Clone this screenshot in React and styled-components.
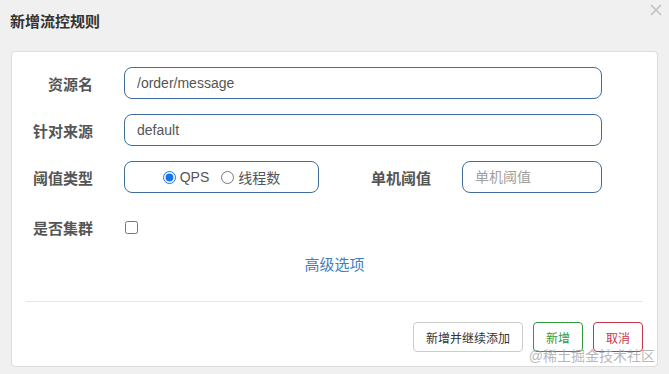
import * as React from 'react';
import styled, { createGlobalStyle } from 'styled-components';

const GlobalStyle = createGlobalStyle`
    html, body {
        margin: 0;
        padding: 0;
        background: #f0f0f0;
    }
    body {
        font-family: "Liberation Sans", "Noto Sans CJK SC", sans-serif;
    }
`;

export default function App() {
    return (
        <Dialog>
            <GlobalStyle />
            <Header>
                <Title>新增流控规则</Title>
                <Close width="12" height="12" viewBox="0 0 12 12">
                    <path d="M1 1 L11 11 M11 1 L1 11" stroke="#c2c2c2" strokeWidth="1.6" fill="none" />
                </Close>
            </Header>
            <Card>
                <Form>
                    <Row>
                        <Label>资源名</Label>
                        <Input width={478} defaultValue="/order/message" />
                    </Row>
                    <Row>
                        <Label>针对来源</Label>
                        <Input width={478} defaultValue="default" />
                    </Row>
                    <Row>
                        <Label>阈值类型</Label>
                        <RadioBox>
                            <RadioItem>
                                <input type="radio" name="grade" defaultChecked />
                                QPS
                            </RadioItem>
                            <RadioItem>
                                <input type="radio" name="grade" />
                                线程数
                            </RadioItem>
                        </RadioBox>
                        <Label width={112}>单机阈值</Label>
                        <Input width={140} placeholder="单机阈值" />
                    </Row>
                    <Row offset={3}>
                        <Label>是否集群</Label>
                        <Check type="checkbox" />
                    </Row>
                </Form>
                <More>高级选项</More>
                <Divider />
                <Footer>
                    <Button>新增并继续添加</Button>
                    <Button tone="#2e9a3e">新增</Button>
                    <Button tone="#c9354b">取消</Button>
                </Footer>
                <Mark>@稀土掘金技术社区</Mark>
            </Card>
        </Dialog>
    );
}

const Dialog = styled.div`
    width: 669px;
    height: 374px;
    padding: 0 11px;
    box-sizing: border-box;
    overflow: hidden;
`;

const Header = styled.div`
    position: relative;
    height: 51px;
    display: flex;
    align-items: center;
    padding-bottom: 11px;
    box-sizing: border-box;
    margin-left: -1px;
`;

const Title = styled.h3`
    margin: 0;
    font-size: 15px;
    font-weight: bold;
    color: #333;
`;

const Close = styled.svg`
    position: absolute;
    right: -4px;
    top: 4px;
`;

const Card = styled.div`
    position: relative;
    height: 316px;
    background: #fff;
    border: 1px solid #dcdcdc;
    border-radius: 4px;
    box-sizing: border-box;
    padding: 15px 14px 0 0;
`;

const Form = styled.div`
    display: flex;
    flex-direction: column;
    gap: 15px;
`;

const Row = styled.div`
    display: flex;
    align-items: center;
    height: 32px;
    margin-top: ${(p) => p.offset || 0}px;
`;

const Label = styled.label`
    width: ${(p) => p.width || 81}px;
    margin-right: 31px;
    text-align: right;
    font-size: 15px;
    font-weight: bold;
    color: #555;
    flex-shrink: 0;
`;

const Input = styled.input`
    width: ${(p) => p.width}px;
    height: 32px;
    box-sizing: border-box;
    border: 1px solid #3f6e9c;
    border-radius: 8px;
    padding: 0 12px;
    font-family: "Liberation Sans", "Noto Sans CJK SC", sans-serif;
    font-size: 14px;
    color: #555;
    outline: none;

    &::placeholder {
        color: #a0a0a0;
    }
`;

const RadioBox = styled.div`
    width: 195px;
    height: 32px;
    box-sizing: border-box;
    border: 1px solid #3f6e9c;
    border-radius: 8px;
    display: flex;
    align-items: center;
    justify-content: center;
    gap: 12px;
`;

const RadioItem = styled.label`
    display: flex;
    align-items: center;
    gap: 4px;
    font-size: 14px;
    color: #555;

    input {
        margin: 0;
        width: 13px;
        height: 13px;
        accent-color: #1a73e8;
    }
`;

const Check = styled.input`
    margin: 0 0 0 1px;
    width: 13px;
    height: 13px;
`;

const More = styled.div`
    margin-top: 6px;
    text-align: center;
    padding-left: 14px;
    font-size: 15px;
    color: #3d7fc0;
    line-height: 32px;
`;

const Divider = styled.div`
    margin: 20px 0 0 14px;
    border-top: 1px solid #e5e5e5;
`;

const Footer = styled.div`
    display: flex;
    justify-content: flex-end;
    gap: 10px;
    margin-top: 20px;
`;

const Button = styled.button`
    height: 30px;
    padding: 0 12px;
    min-width: 50px;
    background: #fff;
    border: 1px solid ${(p) => p.tone || '#ccc'};
    border-radius: 4px;
    color: ${(p) => p.tone || '#333'};
    font-family: "Liberation Sans", "Noto Sans CJK SC", sans-serif;
    font-size: 12px;
`;

const Mark = styled.span`
    position: absolute;
    right: 2px;
    bottom: 1px;
    font-size: 14px;
    color: rgba(160, 160, 160, 0.75);
    pointer-events: none;
`;
